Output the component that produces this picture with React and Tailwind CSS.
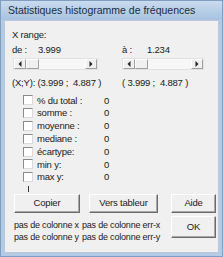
import React from 'react';

const font = { fontFamily: '"Liberation Sans", Arial, sans-serif' };

const rows = ['% du total :', 'somme :', 'moyenne :', 'mediane :', 'écartype:', 'min y:', 'max y:'];

const Scroll = ({ w }) => (
  <div className={`flex h-[12px] ${w} bg-[#f7f7f7] border border-[#e2e2e2]`}>
    <div className="w-[12px] h-full flex items-center justify-center bg-[#f0f0f0] border border-t-white border-l-white border-r-[#a0a0a0] border-b-[#a0a0a0]">
      <svg width="4" height="6" viewBox="0 0 4 6"><path d="M3.5 0 L0.5 3 L3.5 6 Z" fill="#222" /></svg>
    </div>
    <div className="w-[13px] h-full bg-[#f0f0f0] border border-t-white border-l-white border-r-[#a0a0a0] border-b-[#a0a0a0]" />
    <div className="flex-1" />
    <div className="w-[12px] h-full flex items-center justify-center bg-[#f0f0f0] border border-t-white border-l-white border-r-[#a0a0a0] border-b-[#a0a0a0]">
      <svg width="4" height="6" viewBox="0 0 4 6"><path d="M0.5 0 L3.5 3 L0.5 6 Z" fill="#222" /></svg>
    </div>
  </div>
);

const Btn = ({ children, className }) => (
  <div className={`flex items-center justify-center bg-[#f0f0f0] border border-t-white border-l-white border-r-[#6b6b6b] border-b-[#6b6b6b] shadow-[inset_-1px_-1px_0_#a8a8a8] text-[9.5px] ${className}`}>
    {children}
  </div>
);

export default function App() {
  return (
    <div style={font} className="w-[223px] h-[257px] flex flex-col bg-[#b3cbe5] border border-[#7f9ec2] text-[#1a1a1a] text-[9.5px] tracking-[-0.2px] leading-none">
      <div className="h-[19px] shrink-0 flex items-center px-[7px] text-[10.5px] tracking-normal text-[#1b2b3d] bg-gradient-to-b from-[#c9dbee] to-[#a7c2e1]">
        Statistiques histogramme de fréquences
      </div>
      <div className="flex-1 mx-[3px] mb-[3px] bg-[#f0f0f0] border border-[#b9c9db] flex flex-col pl-[7px] pt-[8px]">
        <div className="h-[12px] flex items-center">X range:</div>
        <div className="h-[14px] flex items-center mt-[2px]">
          <span className="w-[26px]">de :</span>
          <span className="w-[84px]">3.999</span>
          <span className="w-[25px]">à :</span>
          <span>1.234</span>
        </div>
        <div className="flex mt-[1px] pl-[1px]">
          <Scroll w="w-[85px]" />
          <div className="w-[24px]" />
          <Scroll w="w-[82px]" />
        </div>
        <div className="h-[12px] flex items-center mt-[7px]">
          <span className="w-[110px]">(X;Y): (3.999 ;&nbsp; 4.887 )</span>
          <span>( 3.999 ;&nbsp; 4.887 )</span>
        </div>
        <div className="flex flex-col mt-[5px] pl-[11px]">
          {rows.map((r) => (
            <div key={r} className="h-[12.8px] flex items-center">
              <div className="w-[10px] h-[10px] bg-white border border-t-[#8a8a8a] border-l-[#8a8a8a] border-r-[#dadada] border-b-[#dadada]" />
              <span className="ml-[4px] w-[67px]">{r}</span>
              <span>0</span>
            </div>
          ))}
        </div>
        <div className="ml-[16px] mt-[2px] w-[1px] h-[6px] bg-[#333]" />
        <div className="flex mt-[2px] pl-[2px] h-[19px]">
          <Btn className="w-[66px]">Copier</Btn>
          <Btn className="w-[69px] ml-[9px]">Vers tableur</Btn>
          <Btn className="w-[45px] ml-[13px]">Aide</Btn>
        </div>
        <div className="flex mt-[7px] pl-[2px] text-[9px]">
          <div className="flex flex-col w-[157px] gap-[3px] pt-[1px]">
            <div className="h-[9px] flex items-center">
              <span className="w-[68px]">pas de colonne x</span>
              <span>pas de colonne err-x</span>
            </div>
            <div className="h-[9px] flex items-center">
              <span className="w-[68px]">pas de colonne y</span>
              <span>pas de colonne err-y</span>
            </div>
          </div>
          <Btn className="w-[45px] h-[22px] -mt-[4px]">OK</Btn>
        </div>
      </div>
    </div>
  );
}
